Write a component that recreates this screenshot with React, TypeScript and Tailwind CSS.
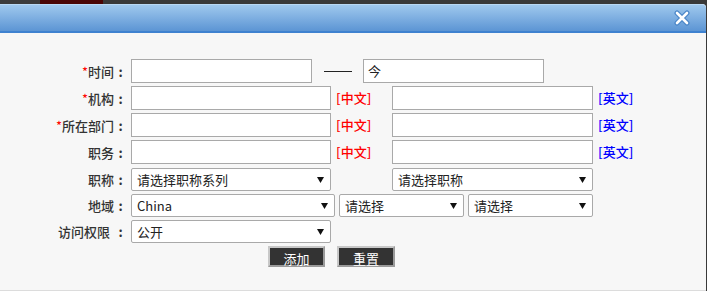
import React from "react";

const font = { fontFamily: '"Noto Sans CJK SC", "Noto Sans", sans-serif' };

function Label({ req, text, sp }: { req?: boolean; text: string; sp?: boolean }) {
  return (
    <div className="w-[131px] shrink-0 pr-[4px] flex justify-end items-center text-[13px] leading-none text-[#333] font-medium">
      {req && <span className="text-[#f00] font-normal">*</span>}
      <span>{text}</span>
      {sp && <span className="w-[4px]" />}
      <span className="w-[13px] text-center font-bold">:</span>
    </div>
  );
}

function Input({ w, value }: { w: string; value?: string }) {
  return (
    <div
      className={`${w} h-[24px] shrink-0 border border-[#a9a9a9] bg-white flex items-center px-[4px] text-[13px] text-[#222]`}
    >
      {value}
    </div>
  );
}

function Select({ w, value }: { w: string; value: string }) {
  return (
    <div
      className={`${w} h-[23px] shrink-0 border border-[#a9a9a9] rounded-[2px] bg-white flex items-center justify-between pl-[5px] pr-[6px] text-[13px] text-[#222]`}
    >
      <span>{value}</span>
      <svg width="7" height="6" viewBox="0 0 7 6">
        <polygon points="0,0 7,0 3.5,6" fill="#111" />
      </svg>
    </div>
  );
}

function Zh() {
  return <span className="w-[61px] shrink-0 pl-[5px] text-[13px] font-medium text-[#f00]">[中文]</span>;
}
function En() {
  return <span className="pl-[5px] text-[13px] font-medium text-[#00f]">[英文]</span>;
}

export default function App() {
  return (
    <div className="w-[707px] h-[291px] bg-[#3a3a3a] relative overflow-hidden" style={font}>
      <div className="h-[4px] flex">
        <div className="w-[40px] bg-[#3c3c3c]" />
        <div className="w-[63px] bg-[#4a0505]" />
        <div className="flex-1 bg-[#393939]" />
      </div>
      <div className="absolute left-0 top-[4px] w-[706px] h-[287px] bg-[#f7f7f7] rounded-tr-[4px] flex flex-col border-b border-[#dcdcdc]">
        <div className="h-[29px] shrink-0 rounded-tr-[4px] border-t border-[#b8d8f4] border-b-2 border-b-[#3f82d0] bg-gradient-to-b from-[#9fc8ed] to-[#5c95d4] flex items-center justify-end pr-[16px]">
          <svg width="16" height="16" viewBox="0 0 16 16">
            <path d="M3 3 L13 13 M13 3 L3 13" stroke="#4a86c8" strokeWidth="5" strokeLinecap="round" />
            <path d="M3 3 L13 13 M13 3 L3 13" stroke="#ffffff" strokeWidth="2.6" strokeLinecap="round" />
          </svg>
        </div>
        <div className="pt-[26px] flex flex-col">
          <div className="flex items-center h-[24px]">
            <Label req text="时间" />
            <Input w="w-[181px]" />
            <div className="ml-[12px] w-[28px] h-px bg-[#222]" />
            <div className="ml-[11px]">
              <Input w="w-[181px]" value="今" />
            </div>
          </div>
          <div className="flex items-center h-[24px] mt-[3px]">
            <Label req text="机构" />
            <Input w="w-[200px]" />
            <Zh />
            <Input w="w-[201px]" />
            <En />
          </div>
          <div className="flex items-center h-[24px] mt-[3px]">
            <Label req text="所在部门" />
            <Input w="w-[200px]" />
            <Zh />
            <Input w="w-[201px]" />
            <En />
          </div>
          <div className="flex items-center h-[24px] mt-[3px]">
            <Label text="职务" />
            <Input w="w-[200px]" />
            <Zh />
            <Input w="w-[201px]" />
            <En />
          </div>
          <div className="flex items-center h-[23px] mt-[4px]">
            <Label text="职称" />
            <Select w="w-[200px]" value="请选择职称系列" />
            <div className="ml-[61px]">
              <Select w="w-[201px]" value="请选择职称" />
            </div>
          </div>
          <div className="flex items-center h-[23px] mt-[3px] gap-[4px]">
            <div className="-mr-[4px]">
              <Label text="地域" />
            </div>
            <Select w="w-[204px]" value="China" />
            <Select w="w-[125px]" value="请选择" />
            <Select w="w-[125px]" value="请选择" />
          </div>
          <div className="flex items-center h-[23px] mt-[3px]">
            <Label text="访问权限" sp />
            <Select w="w-[200px]" value="公开" />
          </div>
          <div className="flex mt-[3px] pl-[268px] gap-[12px]">
            <button className="w-[57px] h-[21px] bg-[#333] border-2 border-t-[#c8c8c8] border-l-[#c8c8c8] border-r-[#9a9a9a] border-b-[#9a9a9a] text-white text-[13px] leading-none pt-[3px]">
              添加
            </button>
            <button className="w-[58px] h-[21px] bg-[#333] border-2 border-t-[#c8c8c8] border-l-[#c8c8c8] border-r-[#9a9a9a] border-b-[#9a9a9a] text-white text-[13px] leading-none pt-[3px]">
              重置
            </button>
          </div>
        </div>
      </div>
    </div>
  );
}
